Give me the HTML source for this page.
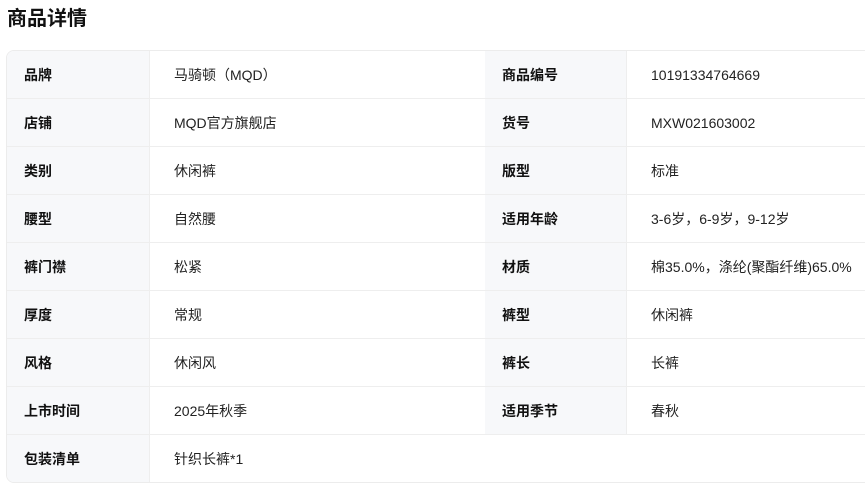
<!DOCTYPE html>
<html><head><meta charset="utf-8"><style>
body{margin:0;background:#fff;font-family:"Liberation Sans","Noto Sans CJK SC",sans-serif;color:#222;}
h1{position:absolute;left:7px;top:5px;margin:0;font-size:20px;font-weight:bold;line-height:28px;color:#111;}
.t{position:absolute;left:6px;top:50px;width:870px;border:1px solid #ececec;border-radius:8px;overflow:hidden;}
.r{display:flex;height:48px;border-bottom:1px solid #eeeeee;box-sizing:border-box;}
.r:last-child{border-bottom:none;height:47px}
.c{display:flex;align-items:center;font-size:14px;box-sizing:border-box;}
.l{background:#f7f8fa;font-weight:bold;padding-left:17px;color:#111;}
.v{padding-left:24px;color:#222;}
.c1{width:143px;border-right:1px solid #eee}.c2{width:335px}.c3{width:142px;border-right:1px solid #eee}.c4{flex:1}
</style></head><body>
<h1>商品详情</h1>
<div class="t">
<div class="r"><div class="c l c1">品牌</div><div class="c v c2">马骑顿（MQD）</div><div class="c l c3">商品编号</div><div class="c v c4">10191334764669</div></div>
<div class="r"><div class="c l c1">店铺</div><div class="c v c2">MQD官方旗舰店</div><div class="c l c3">货号</div><div class="c v c4">MXW021603002</div></div>
<div class="r"><div class="c l c1">类别</div><div class="c v c2">休闲裤</div><div class="c l c3">版型</div><div class="c v c4">标准</div></div>
<div class="r"><div class="c l c1">腰型</div><div class="c v c2">自然腰</div><div class="c l c3">适用年龄</div><div class="c v c4">3-6岁，6-9岁，9-12岁</div></div>
<div class="r"><div class="c l c1">裤门襟</div><div class="c v c2">松紧</div><div class="c l c3">材质</div><div class="c v c4">棉35.0%，涤纶(聚酯纤维)65.0%</div></div>
<div class="r"><div class="c l c1">厚度</div><div class="c v c2">常规</div><div class="c l c3">裤型</div><div class="c v c4">休闲裤</div></div>
<div class="r"><div class="c l c1">风格</div><div class="c v c2">休闲风</div><div class="c l c3">裤长</div><div class="c v c4">长裤</div></div>
<div class="r"><div class="c l c1">上市时间</div><div class="c v c2">2025年秋季</div><div class="c l c3">适用季节</div><div class="c v c4">春秋</div></div>
<div class="r"><div class="c l c1">包装清单</div><div class="c v c2">针织长裤*1</div></div>
</div>
</body></html>
